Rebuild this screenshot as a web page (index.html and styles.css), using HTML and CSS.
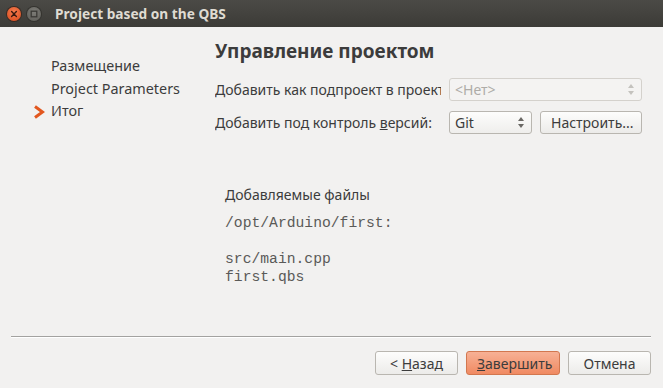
FILE: index.html
```html
<!DOCTYPE html>
<html lang="ru">
<head>
  <meta charset="UTF-8">
  <title>Project based on the QBS</title>
  <link rel="stylesheet" href="styles.css">
</head>
<body>

  <div class="window">
    <div class="titlebar">
      <span class="win-btn close-btn">
        <svg width="14" height="14" viewBox="0 0 14 14"><path d="M4.6 4.6 L9.4 9.4 M9.4 4.6 L4.6 9.4" stroke="#3a1a10" stroke-width="1.4" stroke-linecap="round"/></svg>
      </span>
      <span class="win-btn min-btn">
        <svg width="14" height="14" viewBox="0 0 14 14"><rect x="4.2" y="4.2" width="5.6" height="5.6" fill="none" stroke="#3a3935" stroke-width="1.3"/></svg>
      </span>
      <span class="win-title">Project based on the QBS</span>
    </div>

    <div class="content">
      <ul class="steps">
        <li class="step">Размещение</li>
        <li class="step">Project Parameters</li>
        <li class="step current">
          <svg class="step-arrow" width="12" height="14" viewBox="0 0 12 14"><path d="M2 1.5 L9.5 7 L2 12.5" fill="none" stroke="#e2571e" stroke-width="3" stroke-linejoin="miter"/></svg>
          Итог
        </li>
      </ul>

      <div class="page">
        <h1 class="page-title">Управление проектом</h1>

        <div class="form-row">
          <label class="form-label">Добавить как подпроект в проект:</label>
          <div class="combo disabled wide">
            <span>&lt;Нет&gt;</span>
            <span class="spin"></span>
          </div>
        </div>

        <div class="form-row">
          <label class="form-label">Добавить под контроль <u>в</u>ерсий:</label>
          <div class="combo">
            <span>Git</span>
            <span class="spin"></span>
          </div>
          <button class="btn setup-btn">Настроить...</button>
        </div>

        <div class="files">
          <div class="files-title">Добавляемые файлы</div>
          <pre class="files-list">/opt/Arduino/first:

src/main.cpp
first.qbs</pre>
        </div>
      </div>
    </div>

    <div class="footer">
      <hr class="separator">
      <div class="actions">
        <button class="btn">&lt; <u>Н</u>азад</button>
        <button class="btn primary"><u>З</u>авершить</button>
        <button class="btn">Отмена</button>
      </div>
    </div>
  </div>

</body>
</html>
```

FILE: styles.css
```css
* { box-sizing: border-box; }

body {
  margin: 0;
  background: #f2f1f0;
  font-family: 'Noto Sans', 'Open Sans', sans-serif;
  font-size: 14px;
  color: #3c3c3c;
}

.window {
  width: 663px;
  height: 388px;
  display: flex;
  flex-direction: column;
}

.titlebar {
  height: 27px;
  background: linear-gradient(#4b4a46, #3c3b37);
  display: flex;
  align-items: center;
  padding-left: 7px;
  gap: 6px;
}

.win-btn {
  width: 14px;
  height: 14px;
  border-radius: 50%;
  display: flex;
}

.close-btn {
  background: radial-gradient(circle at 50% 35%, #f47c4f, #d9481a);
  box-shadow: 0 0 0 1px #3a2a22;
}

.min-btn {
  background: radial-gradient(circle at 50% 35%, #7d7c77, #5c5b56);
  box-shadow: 0 0 0 1px #34332f;
}

.win-title {
  margin-left: 8px;
  color: #dfdbd2;
  font-weight: bold;
  font-size: 13.7px;
}

.content {
  flex: 1;
  display: flex;
}

.steps {
  list-style: none;
  margin: 0;
  padding: 28px 0 0 33px;
  width: 215px;
}

.step {
  height: 22.7px;
  line-height: 22.7px;
  padding-left: 18px;
  font-size: 14.4px;
  position: relative;
}

.step-arrow {
  position: absolute;
  left: 0;
  top: 5px;
}

.page {
  flex: 1;
  padding-top: 11px;
}

.page-title {
  margin: 0 0 14px;
  font-size: 19px;
  font-weight: bold;
  color: #3c3c3c;
}

.form-row {
  display: flex;
  align-items: center;
  height: 23px;
  margin-bottom: 10px;
}

.form-label {
  width: 226px;
  margin-right: 8px;
  white-space: nowrap;
  overflow: hidden;
}

.combo {
  height: 23px;
  width: 83px;
  border: 1px solid #b9b6b0;
  border-radius: 3px;
  background: linear-gradient(#fdfdfc, #efeeec);
  display: flex;
  align-items: center;
  justify-content: space-between;
  padding: 0 6px 0 5px;
  color: #3c3c3c;
}

.combo.wide {
  width: 193px;
}

.combo.disabled {
  border-color: #d4d1cc;
  background: #f4f3f2;
  color: #aeaca8;
}

.spin {
  width: 7px;
  height: 11px;
  position: relative;
}

.spin::before,
.spin::after {
  content: '';
  position: absolute;
  left: 0;
  border-left: 3.5px solid transparent;
  border-right: 3.5px solid transparent;
}

.spin::before {
  top: 0;
  border-bottom: 4px solid #6a6864;
}

.spin::after {
  bottom: 0;
  border-top: 4px solid #6a6864;
}

.combo.disabled .spin::before { border-bottom-color: #c4c2be; }
.combo.disabled .spin::after { border-top-color: #c4c2be; }

.btn {
  height: 24px;
  border: 1px solid #b9b6b0;
  border-radius: 3px;
  background: linear-gradient(#fdfdfc, #ecebe9);
  font-family: inherit;
  font-size: 14px;
  color: #3c3c3c;
  padding: 0 10px;
}

.setup-btn {
  height: 23px;
  width: 102px;
  margin-left: 8px;
}

.files {
  padding: 41px 0 0 10px;
}

.files-title {
  margin-bottom: 10px;
}

.files-list {
  margin: 0;
  font-family: 'Liberation Mono', monospace;
  font-size: 14.7px;
  line-height: 18px;
  color: #5a5a58;
}

.footer {
  padding: 0 12px 13px 11px;
}

.separator {
  margin: 0 0 13px;
  border: none;
  border-top: 1px solid #a3a2a0;
  border-bottom: 1px solid #ffffff;
}

.actions {
  display: flex;
  justify-content: flex-end;
  gap: 8px;
}

.actions .btn {
  width: 83px;
}

.actions .btn.primary {
  width: 94px;
  background: linear-gradient(#f7b195, #f08a62);
  border-color: #d2774f;
  color: #3c3c3c;
}
```
